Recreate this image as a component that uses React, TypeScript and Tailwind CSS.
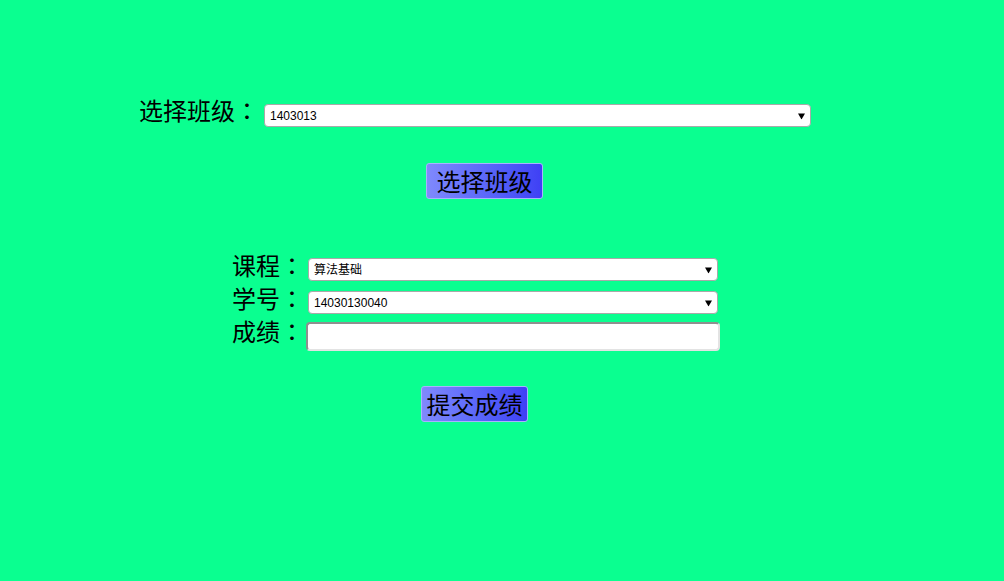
import React from "react";

const cjk = { fontFamily: '"Microsoft YaHei", "Noto Sans CJK SC", sans-serif' };
const colonFont = { fontFamily: '"Noto Sans CJK TC", "Noto Sans CJK SC", sans-serif' };

function Arrow() {
  return (
    <svg
      className="pointer-events-none absolute right-[6px] top-1/2 -translate-y-1/2"
      width="7"
      height="7"
      viewBox="0 0 7 7"
    >
      <path d="M0 1 L7 1 L3.5 7 Z" fill="#000" />
    </svg>
  );
}

function Select({ width, value, options }: { width: string; value: string; options: string[] }) {
  return (
    <div className={`relative ${width} h-[23px]`}>
      <select
        defaultValue={value}
        className="block w-full h-full appearance-none bg-white border border-[#a9a9a9] rounded-[4px] pl-[5px] pr-[16px] text-[12px] text-black outline-none"
        style={{ fontFamily: '"Liberation Sans", "Noto Sans CJK SC", sans-serif' }}
      >
        {options.map((o) => (
          <option key={o}>{o}</option>
        ))}
      </select>
      <Arrow />
    </div>
  );
}

function Label({ text, className }: { text: string; className: string }) {
  return (
    <span className={className}>
      {text}
      <span style={colonFont}>：</span>
    </span>
  );
}

export default function App() {
  return (
    <div className="w-[1004px] h-[581px] bg-[#0aff90] overflow-hidden" style={cjk}>
      <div className="pt-[100px]">
        <div className="flex items-center h-[31px] pl-[139px]">
          <Label
            text="选择班级"
            className="text-[24px] leading-none text-black whitespace-nowrap pb-[11px]"
          />
          <div className="ml-[5px]">
            <Select width="w-[547px]" value="1403013" options={["1403013", "1403012", "1403011"]} />
          </div>
        </div>
        <div className="mt-[32px] pl-[426px]">
          <button
            className="block h-[36px] w-[117px] text-[24px] leading-none text-black rounded-[3px] border border-[#a9b2ff] bg-gradient-to-r from-[#8089fc] to-[#3f3ff5]"
            style={cjk}
          >
            选择班级
          </button>
        </div>

        <div className="mt-[54px]">
          <div className="flex items-center h-[33px]">
            <Label text="课程" className="w-[304px] text-right text-[24px] leading-none text-black pb-[9px]" />
            <div className="ml-[4px]">
              <Select width="w-[410px]" value="算法基础" options={["算法基础", "数据结构"]} />
            </div>
          </div>
          <div className="flex items-center h-[33px]">
            <Label text="学号" className="w-[304px] text-right text-[24px] leading-none text-black pb-[9px]" />
            <div className="ml-[4px]">
              <Select width="w-[410px]" value="14030130040" options={["14030130040", "14030130041"]} />
            </div>
          </div>
          <div className="flex items-start h-[33px] pt-[3px]">
            <Label text="成绩" className="w-[304px] text-right text-[24px] leading-[17px] text-black" />
            <input
              type="text"
              className="block ml-[2px] w-[414px] h-[29px] bg-white rounded-[4px] border-2 border-t-[#8f8f8f] border-l-[#8f8f8f] border-r-[#e3e3e3] border-b-[#e3e3e3] outline-none px-1 text-[14px]"
            />
          </div>
        </div>

        <div className="mt-[34px] pl-[421px]">
          <button
            className="block h-[36px] w-[107px] text-[24px] leading-none text-black rounded-[3px] border border-[#a9b2ff] bg-gradient-to-r from-[#8089fc] to-[#3f3ff5]"
            style={cjk}
          >
            提交成绩
          </button>
        </div>
      </div>
    </div>
  );
}
